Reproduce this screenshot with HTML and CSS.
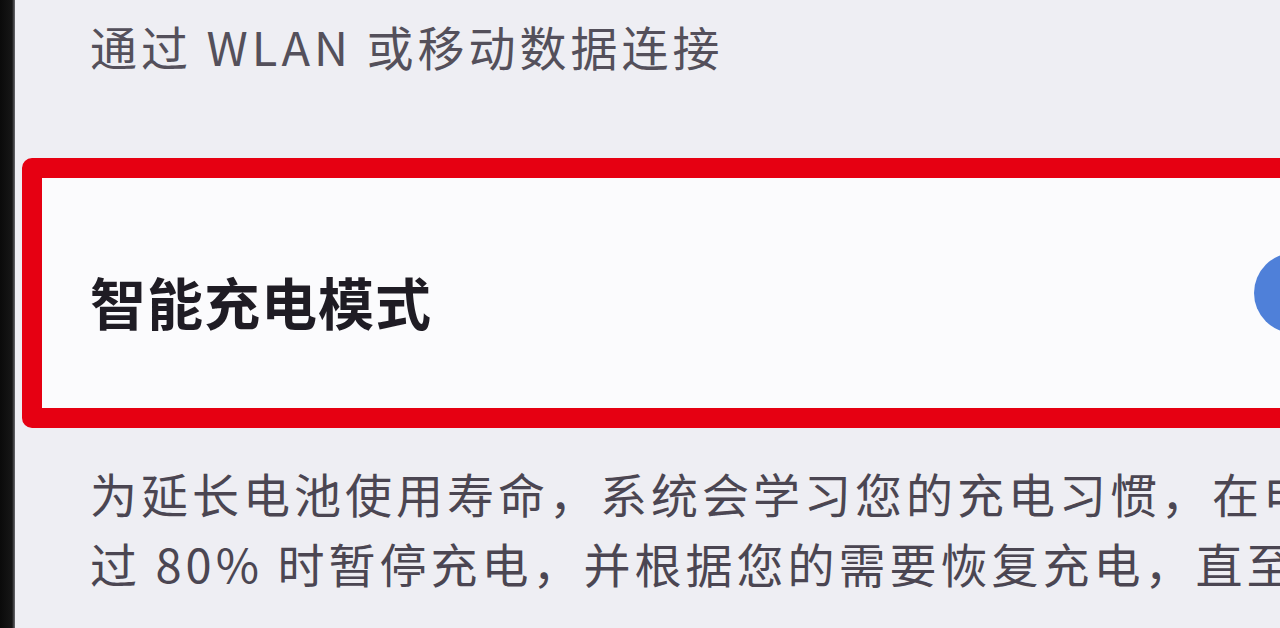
FILE: index.html
```html
<!DOCTYPE html>
<html lang="zh-CN">
<head>
    <meta charset="UTF-8">
    <meta name="viewport" content="width=device-width, initial-scale=1.0">
    <title>智能充电模式</title>
    <link rel="stylesheet" href="styles.css">
</head>
<body>
    <div class="bezel"></div>
    <div class="screen">
        <p class="subtitle">通过 WLAN 或移动数据连接</p>

        <div class="option highlight">
            <span class="option-title">智能充电模式</span>
            <span class="switch on"></span>
        </div>

        <div class="desc">
            <p>为延长电池使用寿命，系统会学习您的充电习惯，在电池电量达到</p>
            <p>过 80% 时暂停充电，并根据您的需要恢复充电，直至充满</p>
        </div>
    </div>
</body>
</html>
```

FILE: styles.css
```css
body {
    margin: 0;
    height: 628px;
    display: flex;
    overflow: hidden;
    font-family: "Noto Sans CJK SC", "Noto Sans", sans-serif;
    background-color: #0d0d0e;
}

p {
    margin: 0;
}

/* phone edge on the left */
.bezel {
    width: 15px;
    flex-shrink: 0;
    background: linear-gradient(to right, #0a0a0a 0, #161616 80%, #6b6b70 100%);
}

.screen {
    flex: 1;
    min-width: 0;
    background-color: #eeeef3;
    overflow: hidden;
}

.subtitle {
    padding: 16px 0 0 75px;
    font-size: 47px;
    line-height: 60px;
    letter-spacing: 4px;
    color: #54505b;
    white-space: nowrap;
}

.option {
    display: flex;
    align-items: center;
    height: 228px;
    margin: 82px -60px 0 7px;
    padding: 14px 0 0 48px;
    box-sizing: border-box;
    background-color: #fbfbfd;
}

/* red marker around the row */
.highlight {
    height: 270px;
    border: 20px solid #e60012;
    border-radius: 10px;
}

.option-title {
    font-size: 56px;
    font-weight: 700;
    letter-spacing: 1px;
    color: #1f1c24;
}

.switch {
    width: 110px;
    height: 80px;
    margin-left: auto;
    margin-right: -44px;
    margin-top: -14px;
    border-radius: 40px;
    background-color: #c9c9cf;
}

.switch.on {
    background-color: #4f80d9;
}

.desc {
    margin-top: 30px;
    padding-left: 75px;
    font-size: 47px;
    line-height: 70px;
    letter-spacing: 4px;
    color: #4b4652;
    white-space: nowrap;
}
```
